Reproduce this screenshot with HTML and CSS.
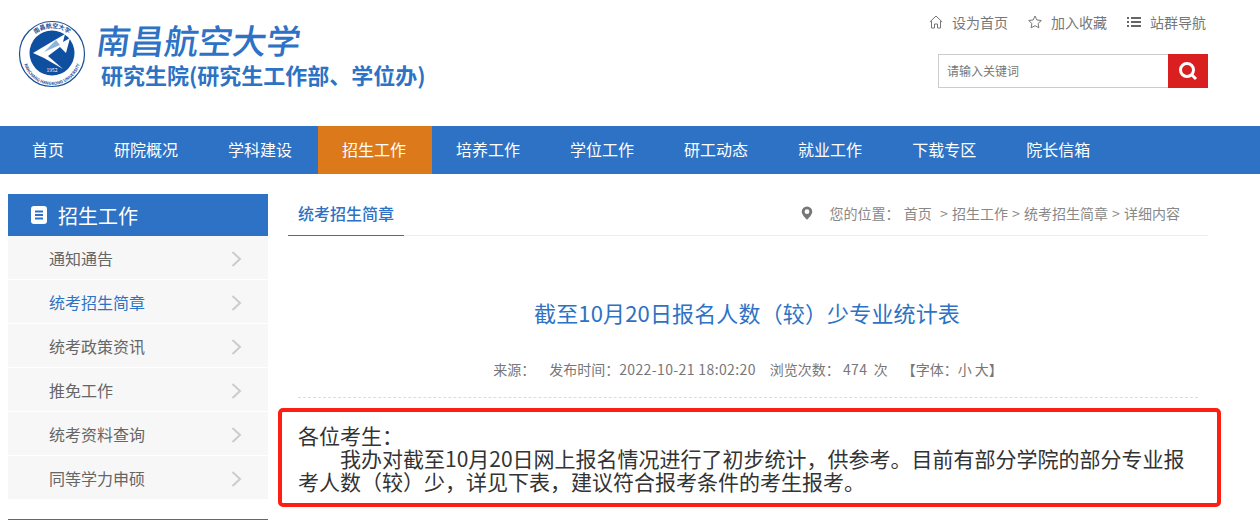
FILE: index.html
```html
<!DOCTYPE html>
<html lang="zh-CN">
<head>
    <meta charset="UTF-8">
    <title>截至10月20日报名人数（较）少专业统计表</title>
    <link rel="stylesheet" href="styles.css">
</head>
<body>
    <header class="header">
        <div class="logo">
            <svg class="seal" width="68" height="68" viewBox="0 0 68 68">
                <defs>
                    <path id="ring-top" d="M8 34a26 26 0 0 1 52 0"/>
                    <path id="ring-bottom" d="M5 36a29 29 0 0 0 58 0"/>
                </defs>
                <circle cx="34" cy="34" r="32.5" fill="#fff" stroke="#1a4f96" stroke-width="1.2"/>
                <circle cx="34" cy="33" r="22.500" fill="#0f4fa0"/>
                <path d="M15 33L47 14 45 22 52 18 48 33 42 27 30 36 45 49 26 38z" fill="#fff"/>
                <path d="M26 32L42 25 38 20z" fill="#8fb4dc"/>
                <text class="seal-top"><textPath href="#ring-top" startOffset="50%" text-anchor="middle">南昌航空大学</textPath></text>
                <text class="seal-bottom"><textPath href="#ring-bottom" startOffset="50%" text-anchor="middle">NANCHANG HANGKONG UNIVERSITY</textPath></text>
                <text class="seal-year" x="34" y="52" text-anchor="middle">1952</text>
            </svg>
            <div class="logo-text">
                <div class="logo-name">南昌航空大学</div>
                <div class="logo-sub">研究生院(研究生工作部、学位办)</div>
            </div>
        </div>
        <div class="header-right">
            <div class="top-links">
                <a class="top-link">
                    <svg width="14" height="14" viewBox="0 0 14 14"><path d="M.8 7L7 1l6.2 6M2.5 6v7h3V9h3v4h3V6" fill="none" stroke="#777" stroke-width="1"/></svg>
                    设为首页
                </a>
                <a class="top-link">
                    <svg width="14" height="14" viewBox="0 0 14 14"><path d="M7 1l1.9 4 4.4.5-3.2 3 .8 4.3L7 10.700l-3.900 2.100.8-4.300-3.200-3L5.100 5z" fill="none" stroke="#777" stroke-width="1"/></svg>
                    加入收藏
                </a>
                <a class="top-link">
                    <svg width="14" height="14" viewBox="0 0 14 14"><path d="M0 2h2v2H0zM0 6h2v2H0zM0 10h2v2H0zM4 2h10v2H4zM4 6h10v2H4zM4 10h10v2H4z" fill="#666"/></svg>
                    站群导航
                </a>
            </div>
            <div class="search">
                <input class="search-input" type="text" placeholder="请输入关键词">
                <button class="search-btn">
                    <svg width="20" height="20" viewBox="0 0 20 20"><circle cx="9" cy="9" r="6.500" fill="none" stroke="#fff" stroke-width="3"/><path d="M13.500 13.500L18 18" stroke="#fff" stroke-width="3"/></svg>
                </button>
            </div>
        </div>
    </header>

    <nav class="nav">
        <a class="nav-item">首页</a>
        <a class="nav-item">研院概况</a>
        <a class="nav-item">学科建设</a>
        <a class="nav-item active">招生工作</a>
        <a class="nav-item">培养工作</a>
        <a class="nav-item">学位工作</a>
        <a class="nav-item">研工动态</a>
        <a class="nav-item">就业工作</a>
        <a class="nav-item">下载专区</a>
        <a class="nav-item">院长信箱</a>
    </nav>

    <div class="page">
        <aside class="sidebar">
            <div class="side-title">
                <svg width="16" height="18" viewBox="0 0 16 18"><rect width="16" height="18" rx="3" fill="#fff"/><path d="M4 4.500h8v2H4zM4 8h8v2H4zM4 11.500h8v2H4z" fill="#2d72c4"/></svg>
                招生工作
            </div>
            <ul class="side-list">
                <li class="side-item">通知通告<svg class="chevron" width="11" height="16" viewBox="0 0 11 16"><path d="M1.500 1l7.500 7-7.500 7" fill="none" stroke="#ccc" stroke-width="2"/></svg></li>
                <li class="side-item current">统考招生简章<svg class="chevron" width="11" height="16" viewBox="0 0 11 16"><path d="M1.500 1l7.500 7-7.500 7" fill="none" stroke="#ccc" stroke-width="2"/></svg></li>
                <li class="side-item">统考政策资讯<svg class="chevron" width="11" height="16" viewBox="0 0 11 16"><path d="M1.500 1l7.500 7-7.500 7" fill="none" stroke="#ccc" stroke-width="2"/></svg></li>
                <li class="side-item">推免工作<svg class="chevron" width="11" height="16" viewBox="0 0 11 16"><path d="M1.500 1l7.500 7-7.500 7" fill="none" stroke="#ccc" stroke-width="2"/></svg></li>
                <li class="side-item">统考资料查询<svg class="chevron" width="11" height="16" viewBox="0 0 11 16"><path d="M1.500 1l7.500 7-7.500 7" fill="none" stroke="#ccc" stroke-width="2"/></svg></li>
                <li class="side-item">同等学力申硕<svg class="chevron" width="11" height="16" viewBox="0 0 11 16"><path d="M1.500 1l7.500 7-7.500 7" fill="none" stroke="#ccc" stroke-width="2"/></svg></li>
            </ul>
            <div class="side-next"></div>
        </aside>

        <main class="main">
            <div class="crumb-bar">
                <div class="tab">统考招生简章</div>
                <div class="crumbs">
                    <svg width="12" height="14" viewBox="0 0 12 14"><path d="M6 .5a5.300 5.300 0 0 0-5.300 5.300C.7 9 6 13.800 6 13.800s5.300-4.800 5.300-8A5.300 5.300 0 0 0 6 .5zm0 7.600a2.400 2.400 0 1 1 0-4.800 2.400 2.400 0 0 1 0 4.800z" fill="#777"/></svg>
                    <span class="crumb-text">您的位置： 首页 &nbsp;&gt; 招生工作 &gt; 统考招生简章 &gt; 详细内容</span>
                </div>
            </div>
            <h1 class="title">截至10月20日报名人数（较）少专业统计表</h1>
            <div class="meta">
                <span>来源：</span>
                <span>发布时间：<span class="num">2022-10-21 18:02:20</span></span>
                <span>浏览次数： <span class="num">474</span> &nbsp;次</span>
                <span>【字体：小 大】</span>
            </div>
            <div class="notice">
                <p>各位考生：</p>
                <p class="indent">我办对截至10月20日网上报名情况进行了初步统计，供参考。目前有部分学院的部分专业报考人数（较）少，详见下表，建议符合报考条件的考生报考。</p>
            </div>
        </main>
    </div>
</body>
</html>
```

FILE: styles.css
```css
* {
    box-sizing: border-box;
}
body {
    margin: 0;
    font-family: "Noto Sans CJK SC", "Liberation Sans", sans-serif;
    color: #666;
    background-color: #fff;
    overflow: hidden;
}
ul, p, h1 {
    margin: 0;
    padding: 0;
}
.header {
    height: 126px;
    display: flex;
    justify-content: space-between;
    padding: 0 52px 0 18px;
}
.logo {
    display: flex;
    align-items: flex-start;
    padding-top: 20px;
}
.seal-top {
    font-size: 6px;
    font-weight: 700;
    fill: #1a4f96;
}
.seal-bottom {
    font-size: 4.200px;
    font-weight: 700;
    fill: #1a4f96;
}
.seal-year {
    font-size: 5px;
    fill: #fff;
}
.logo-text {
    margin-left: 11px;
    color: #2d72c4;
}
.logo-name {
    margin-left: -3px;
    font-size: 34px;
    font-weight: 500;
    line-height: 40px;
    height: 41px;
    transform: skewX(-8deg);
    transform-origin: left bottom;
}
.logo-sub {
    margin: 0 0 0 4px;
    font-size: 22px;
    font-weight: 700;
    line-height: 26px;
}
.header-right {
    display: flex;
    flex-direction: column;
    align-items: flex-end;
}
.top-links {
    display: flex;
    gap: 20px;
    height: 54px;
    padding: 12px 2px 0 0;
    font-size: 14px;
    line-height: 20px;
    color: #777;
}
.top-link {
    display: flex;
    align-items: center;
    gap: 9px;
    height: 20px;
}
.search {
    display: flex;
    width: 270px;
    height: 34px;
}
.search-input {
    flex: 1;
    min-width: 0;
    padding: 0 8px 2px;
    border: 1px solid #ccc;
    border-right: none;
    font-family: inherit;
    font-size: 12px;
    outline: none;
}
.search-input::placeholder {
    color: #777;
}
.search-btn {
    width: 40px;
    border: none;
    padding: 0;
    background-color: #d91f1f;
    display: flex;
    align-items: center;
    justify-content: center;
}
.nav {
    display: flex;
    height: 48px;
    padding-left: 8px;
    background-color: #2d72c4;
}
.nav-item {
    padding: 0 26px 0 24px;
    font-size: 16px;
    line-height: 46px;
    color: #fff;
}
.nav-item.active {
    background-color: #dc7a1b;
}
.page {
    display: flex;
    padding: 20px 52px 0 8px;
}
.sidebar {
    width: 260px;
    flex-shrink: 0;
}
.side-title {
    display: flex;
    align-items: center;
    gap: 11px;
    height: 42px;
    padding-left: 23px;
    font-size: 20px;
    color: #fff;
    background-color: #2d72c4;
}
.side-list {
    list-style: none;
}
.side-item {
    display: flex;
    align-items: center;
    justify-content: space-between;
    height: 43px;
    margin-bottom: 1px;
    padding: 0 26px 0 41px;
    font-size: 16px;
    background-color: #f7f7f7;
}
.side-item.current {
    color: #2d72c4;
}
.chevron {
    margin-top: 3px;
}
.side-next {
    margin-top: 20px;
    border-top: 1px solid #2d72c4;
}
.main {
    flex: 1;
    margin-left: 20px;
}
.crumb-bar {
    display: flex;
    justify-content: space-between;
    height: 42px;
    border-bottom: 1px solid #eee;
}
.tab {
    width: 116px;
    height: 42px;
    border-bottom: 1px solid #2d72c4;
    padding-top: 7px;
    text-align: center;
    font-size: 16px;
    font-weight: 500;
    line-height: 24px;
    color: #2d72c4;
}
.crumbs {
    display: flex;
    align-items: center;
    gap: 17px;
    height: 38px;
    padding-right: 28px;
    font-size: 14px;
    color: #888;
    word-spacing: 1px;
}
.title {
    margin-top: 59px;
    padding-right: 2px;
    text-align: center;
    font-size: 22px;
    font-weight: 400;
    line-height: 34px;
    letter-spacing: .15px;
    color: #2d72c4;
}
.meta {
    display: flex;
    justify-content: center;
    gap: 14px;
    margin: 30px 10px 0;
    height: 39px;
    border-bottom: 1px dashed #ddd;
    font-size: 14px;
    line-height: 20px;
    color: #777;
}
.num {
    letter-spacing: .38px;
}
.notice {
    margin: 10px -13px 0 -10px;
    height: 99px;
    border: 4px solid #ff1e12;
    border-radius: 5px;
    padding: 12px 19px 0 16px;
    font-size: 21px;
    line-height: 23px;
    color: #333;
}
.indent {
    text-indent: 2em;
}
```
